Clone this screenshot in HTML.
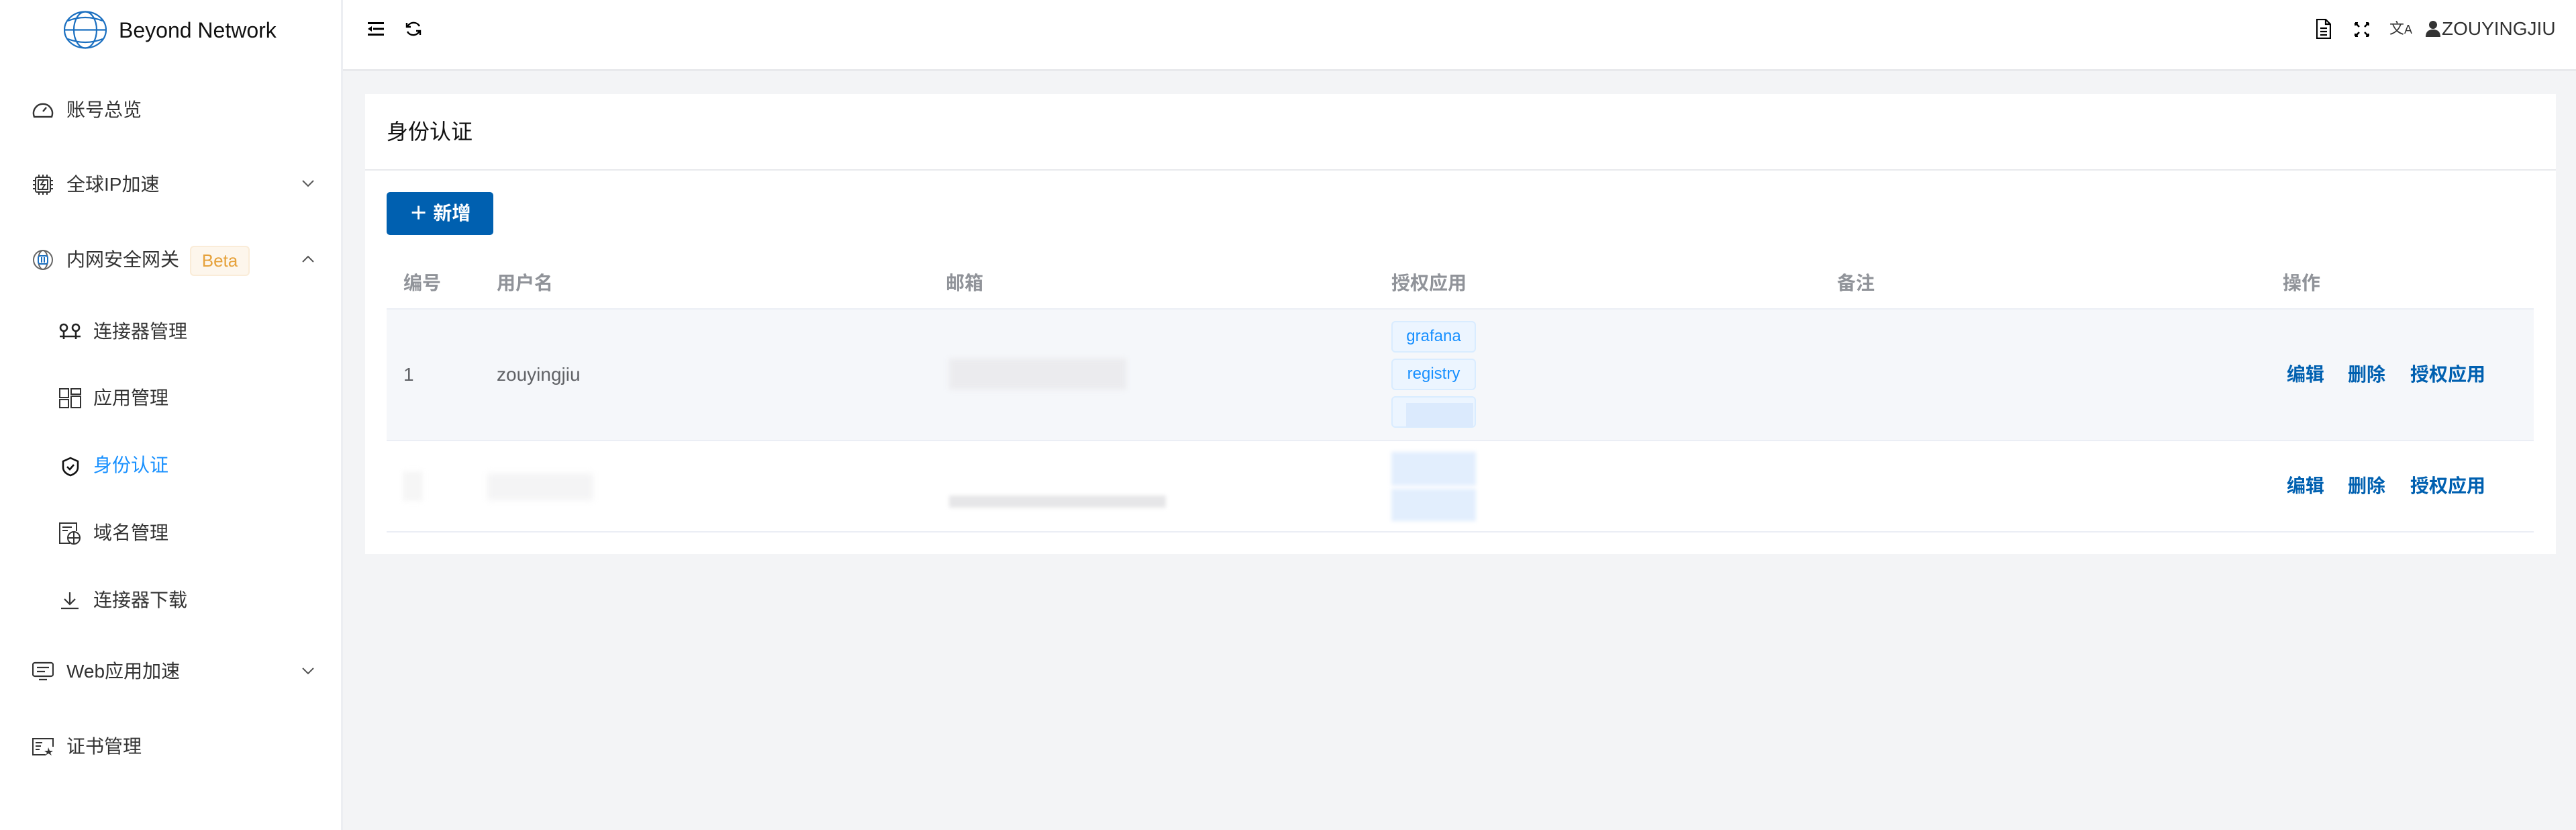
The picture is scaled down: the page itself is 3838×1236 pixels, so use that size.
<!DOCTYPE html>
<html><head><meta charset="utf-8"><style>
*{margin:0;padding:0;box-sizing:border-box}
body{width:3838px;height:1236px;background:#f3f4f6;font-family:"Liberation Sans","Noto Sans CJK SC",sans-serif;position:relative;overflow:hidden;color:#333}
.a{position:absolute}
.side{left:0;top:0;width:511px;height:1236px;background:#fff;border-right:3px solid #eceef2}
.mi{position:absolute;font-size:28px;color:#333;line-height:40px;white-space:nowrap}
.ic{position:absolute}
.top{left:511px;top:0;right:0;height:106px;background:#fff;border-bottom:3px solid #e8e9ec}
.card{left:544px;top:140px;width:3264px;height:685px;background:#fff}
.th{position:absolute;top:402px;font-size:28px;color:#909399;font-weight:bold;line-height:40px}
.td{position:absolute;font-size:28px;color:#606266;line-height:40px}
.tag{position:absolute;left:2073px;width:126px;height:47px;border:2px solid #d9ecff;background:#ecf5ff;border-radius:6px;color:#1890ff;font-size:24px;text-align:center;line-height:42px}
.act{position:absolute;font-size:28px;color:#0060b0;font-weight:bold;line-height:40px}
</style></head><body>
<div class="a side"></div>
<!-- logo -->
<svg class="a" style="left:95px;top:16px" width="64" height="57" viewBox="0 0 64 57" fill="none" stroke="#1a6fc0" stroke-width="2.2"><ellipse cx="32" cy="28.5" rx="31" ry="27"/><ellipse cx="32" cy="28.5" rx="17" ry="27"/><path d="M6 15 Q32 5 58 15 M6 42 Q32 52 58 42 M1 28.5 H63"/></svg>
<div class="a" style="left:177px;top:24px;font-size:32px;font-weight:500;color:#111;line-height:42px">Beyond Network</div>

<!-- menu -->
<svg class="ic" style="left:48px;top:150px" width="32" height="26" viewBox="0 0 32 26" fill="none" stroke="#333" stroke-width="2.4"><path d="M3 24 A14 14 0 1 1 29 24 Z"/><path d="M16 16 L21 10"/></svg>
<div class="mi" style="left:99px;top:144px">账号总览</div>
<svg class="ic" style="left:48px;top:259px" width="32" height="32" viewBox="0 0 32 32" fill="none" stroke="#333" stroke-width="2"><rect x="5" y="5" width="22" height="22" rx="2"/><rect x="9" y="9" width="14" height="14"/><path d="M17 10 L13 16 H19 L15 22 M10 1v4 M16 1v4 M22 1v4 M10 27v4 M16 27v4 M22 27v4 M1 10h4 M1 16h4 M1 22h4 M27 10h4 M27 16h4 M27 22h4"/></svg>
<div class="mi" style="left:99px;top:255px">全球IP加速</div>
<svg class="ic" style="left:450px;top:267px" width="18" height="12" viewBox="0 0 18 12" fill="none" stroke="#555" stroke-width="2"><path d="M1 2 L9 10 L17 2"/></svg>
<svg class="ic" style="left:48px;top:371px" width="32" height="32" viewBox="0 0 32 32" fill="none" stroke="#666" stroke-width="2"><circle cx="16" cy="16" r="14"/><ellipse cx="16" cy="16" rx="7" ry="14"/><rect x="9" y="10" width="14" height="12" rx="3" fill="#fff" stroke="#1a6fc0"/><path d="M14 12v8 M18 12v8" stroke="#1a6fc0"/></svg>
<div class="mi" style="left:99px;top:367px">内网安全网关</div>
<div class="a" style="left:283px;top:366px;width:89px;height:45px;background:#fdf6ec;border:2px solid #faecd8;border-radius:6px;color:#e6a23c;font-size:26px;text-align:center;line-height:41px">Beta</div>
<svg class="ic" style="left:450px;top:380px" width="18" height="12" viewBox="0 0 18 12" fill="none" stroke="#555" stroke-width="2"><path d="M1 10 L9 2 L17 10"/></svg>

<svg class="ic" style="left:88px;top:480px" width="33" height="28" viewBox="0 0 33 28" fill="none" stroke="#222" stroke-width="2.6"><circle cx="7" cy="8" r="5"/><circle cx="25" cy="8" r="5"/><path d="M7 13v12 M25 13v12 M1 21h31"/></svg>
<div class="mi" style="left:139px;top:474px">连接器管理</div>
<svg class="ic" style="left:88px;top:578px" width="33" height="30" viewBox="0 0 33 30" fill="none" stroke="#333" stroke-width="2"><rect x="1" y="1" width="13" height="13"/><rect x="1" y="17" width="13" height="12"/><rect x="18" y="1" width="14" height="8"/><rect x="18" y="12" width="14" height="17"/></svg>
<div class="mi" style="left:139px;top:573px">应用管理</div>
<svg class="ic" style="left:92px;top:680px" width="26" height="30" viewBox="0 0 26 30" fill="none" stroke="#111" stroke-width="2.6"><path d="M13 2 L24 7 V16 Q24 24 13 28 Q2 24 2 16 V7 Z"/><path d="M8 15 L12 19 L18 12"/></svg>
<div class="mi" style="left:139px;top:673px;color:#1890ff">身份认证</div>
<svg class="ic" style="left:88px;top:777px" width="34" height="35" viewBox="0 0 34 35" fill="none" stroke="#333" stroke-width="2"><path d="M16 32 H1 V2 H26 V14"/><path d="M5 8h14 M5 13h8"/><circle cx="22" cy="24" r="9"/><path d="M13 24h18 M22 15v18"/></svg>
<div class="mi" style="left:139px;top:774px">域名管理</div>
<svg class="ic" style="left:90px;top:880px" width="28" height="28" viewBox="0 0 28 28" fill="none" stroke="#333" stroke-width="2.2"><path d="M14 2v18 M6 12 L14 20 L22 12 M1 26h26"/></svg>
<div class="mi" style="left:139px;top:874px">连接器下载</div>

<svg class="ic" style="left:48px;top:985px" width="32" height="30" viewBox="0 0 32 30" fill="none" stroke="#333" stroke-width="2.2"><rect x="1" y="2" width="30" height="20" rx="3"/><path d="M7 9h18 M7 15h12 M10 27h12"/></svg>
<div class="mi" style="left:99px;top:980px">Web应用加速</div>
<svg class="ic" style="left:450px;top:993px" width="18" height="12" viewBox="0 0 18 12" fill="none" stroke="#555" stroke-width="2"><path d="M1 2 L9 10 L17 2"/></svg>
<svg class="ic" style="left:48px;top:1098px" width="32" height="28" viewBox="0 0 32 28" fill="none" stroke="#333" stroke-width="2"><path d="M20 26 H1 V2 H31 V14"/><path d="M5 8h10 M5 13h8 M5 18h6"/><path d="M24 15 L26 20 L31 20 L27 23 L29 27 L24 24 L20 27 L22 23 L18 20 L23 20 Z" fill="#333" stroke="none"/></svg>
<div class="mi" style="left:99px;top:1092px">证书管理</div>

<!-- top bar -->
<div class="a top"></div>
<svg class="a" style="left:548px;top:33px" width="24" height="20" viewBox="0 0 24 20" fill="#000"><rect x="0" y="0" width="24" height="3"/><rect x="8" y="8.5" width="16" height="3"/><rect x="0" y="17" width="24" height="3"/><path d="M0 10 L6 6 V14 Z"/></svg>
<svg class="a" style="left:603px;top:30px" width="26" height="26" viewBox="0 0 26 26" fill="none" stroke="#000" stroke-width="2.4"><path d="M4 10 A10 10 0 0 1 22 9"/><path d="M22 16 A10 10 0 0 1 4 17"/><path d="M3 4 V10 H9" stroke-width="2.4"/><path d="M23 22 V16 H17"/></svg>
<svg class="a" style="left:3451px;top:28px" width="22" height="30" viewBox="0 0 22 30" fill="none" stroke="#000" stroke-width="2.2"><path d="M1 1 H14 L21 8 V29 H1 Z M14 1 V8 H21 M6 14h10 M6 19h10 M6 24h10"/></svg>
<svg class="a" style="left:3508px;top:33px" width="22" height="22" viewBox="0 0 22 22" fill="none" stroke="#000" stroke-width="2.6"><path d="M1 1 L7 7 M1 1h4 M1 1v4 M21 1 L15 7 M21 1h-4 M21 1v4 M1 21 L7 15 M1 21h4 M1 21v-4 M21 21 L15 15 M21 21h-4 M21 21v-4"/></svg>
<div class="a" style="left:3560px;top:28px;font-size:22px;color:#333;line-height:30px">文<span style="font-size:18px">A</span></div>
<svg class="a" style="left:3614px;top:31px" width="22" height="24" viewBox="0 0 22 24" fill="#333"><circle cx="11" cy="6" r="6"/><path d="M0 24 Q0 13 11 13 Q22 13 22 24 Z"/></svg>
<div class="a" style="left:3638px;top:23px;font-size:28px;color:#333;line-height:40px">ZOUYINGJIU</div>

<!-- card -->
<div class="a card"></div>
<div class="a" style="left:576px;top:176px;font-size:32px;color:#111;line-height:40px">身份认证</div>
<div class="a" style="left:544px;top:252px;width:3264px;height:2px;background:#e8e9ec"></div>
<div class="a" style="left:576px;top:286px;width:159px;height:64px;background:#0060b0;border-radius:5px;color:#fff;font-size:28px;font-weight:bold;line-height:64px;text-align:center">＋ 新增</div>

<div class="th" style="left:601px">编号</div>
<div class="th" style="left:740px">用户名</div>
<div class="th" style="left:1409px">邮箱</div>
<div class="th" style="left:2073px">授权应用</div>
<div class="th" style="left:2737px">备注</div>
<div class="th" style="left:3401px">操作</div>
<div class="a" style="left:576px;top:459px;width:3199px;height:2px;background:#ebeef5"></div>
<div class="a" style="left:576px;top:461px;width:3199px;height:194px;background:#f5f7fa"></div>
<div class="a" style="left:576px;top:655px;width:3199px;height:2px;background:#ebeef5"></div>
<div class="a" style="left:576px;top:791px;width:3199px;height:2px;background:#ebeef5"></div>

<div class="td" style="left:601px;top:538px">1</div>
<div class="td" style="left:740px;top:538px">zouyingjiu</div>
<div class="a" style="left:1414px;top:534px;width:264px;height:46px;background:#ebebee;filter:blur(4px)"></div>
<div class="tag" style="top:478px">grafana</div>
<div class="tag" style="top:534px">registry</div>
<div class="tag" style="top:590px;color:transparent"><div style="margin:8px 0 0 20px;width:100px;height:36px;background:#dbeafd"></div></div>
<div class="act" style="left:3407px;top:538px">编辑</div>
<div class="act" style="left:3498px;top:538px">删除</div>
<div class="act" style="left:3591px;top:538px">授权应用</div>

<div class="a" style="left:600px;top:702px;width:30px;height:44px;background:#f6f6f6;filter:blur(4px)"></div>
<div class="a" style="left:726px;top:705px;width:158px;height:40px;background:#f4f4f5;filter:blur(5px)"></div>
<div class="a" style="left:1414px;top:738px;width:323px;height:18px;background:#e6e6e8;filter:blur(3px)"></div>
<div class="a" style="left:2073px;top:673px;width:126px;height:50px;background:#e2eefd;filter:blur(3px)"></div>
<div class="a" style="left:2073px;top:728px;width:126px;height:48px;background:#e2eefd;filter:blur(3px)"></div>
<div class="act" style="left:3407px;top:704px">编辑</div>
<div class="act" style="left:3498px;top:704px">删除</div>
<div class="act" style="left:3591px;top:704px">授权应用</div>
</body></html>
